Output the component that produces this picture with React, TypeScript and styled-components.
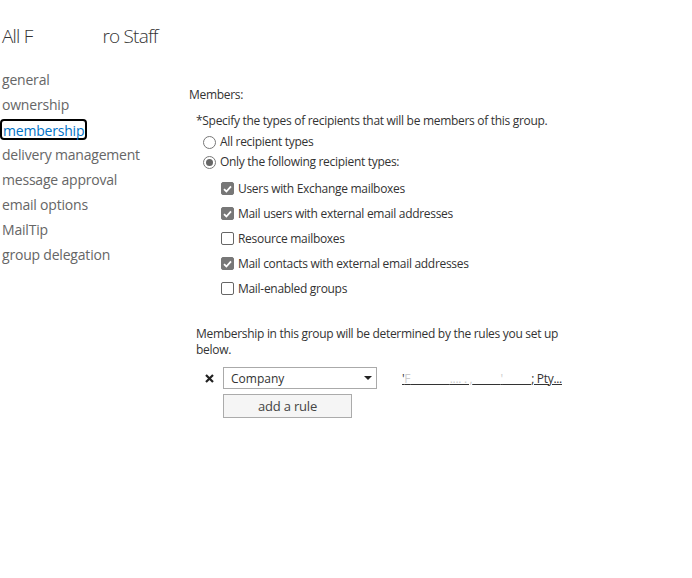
import React from "react";
import styled, { createGlobalStyle } from "styled-components";

const Global = createGlobalStyle`
  html, body { margin: 0; padding: 0; background: #fff; }
  body { font-family: "Segoe UI", "Open Sans", "Noto Sans", sans-serif; color: #333; }
`;

const Page = styled.div`
  width: 692px;
  height: 578px;
  padding-top: 22px;
  box-sizing: border-box;
`;

const Title = styled.h1`
  margin: 0;
  padding-left: 2px;
  font-size: 19px;
  font-weight: 300;
  line-height: 28px;
  color: #333;
  display: flex;
  letter-spacing: -0.8px;
`;

const TitleGap = styled.span`
  display: inline-block;
  width: 70px;
`;

const Body = styled.div`
  display: grid;
  grid-template-columns: 189px 1fr;
  margin-top: 17px;
`;

const Nav = styled.nav`
  display: flex;
  flex-direction: column;
  align-items: flex-start;
`;

const NavItem = styled.a<{ $active?: boolean }>`
  display: inline-block;
  font-size: 14px;
  line-height: 25px;
  height: 25px;
  color: ${(p) => (p.$active ? "#0072c6" : "#666")};
  padding: 0 2px;
  text-decoration: none;
  letter-spacing: -0.2px;
  cursor: pointer;
  box-sizing: border-box;
  ${(p) =>
    p.$active
      ? `
    line-height: 19px;
    height: 21px;
    margin: 2px 0;
    border: 2px solid #000;
    border-radius: 4px;
    padding: 0 1px 0 1px;
  `
      : ""}
`;

const Main = styled.div`
  padding-top: 20px;
  font-size: 12px;
  color: #333;
`;

const Label = styled.div<{ $h?: number }>`
  line-height: 16px;
  height: ${(p) => p.$h ?? 16}px;
  display: flex;
  align-items: center;
  letter-spacing: -0.3px;
`;

const Section = styled.div`
  padding-left: 7px;
  margin-top: 8px;
`;

const Row = styled.label<{ $indent: number; $h: number }>`
  display: flex;
  align-items: center;
  gap: 4px;
  padding-left: ${(p) => p.$indent}px;
  height: ${(p) => p.$h}px;
  line-height: 16px;
  letter-spacing: -0.3px;
`;

const RadioGroup = styled.div`
  margin-top: 1px;
`;

const Radio = styled.span<{ $checked?: boolean }>`
  width: 13px;
  height: 13px;
  box-sizing: border-box;
  border: 1px solid #777;
  border-radius: 50%;
  display: inline-flex;
  align-items: center;
  justify-content: center;
  background: #fff;
  &::after {
    content: "";
    width: 7px;
    height: 7px;
    border-radius: 50%;
    background: ${(p) => (p.$checked ? "#666" : "transparent")};
  }
`;

const Check = styled.span<{ $checked?: boolean }>`
  width: 13px;
  height: 13px;
  box-sizing: border-box;
  border: 1px solid ${(p) => (p.$checked ? "#777" : "#666")};
  border-radius: 2px;
  background: ${(p) => (p.$checked ? "#777" : "#fff")};
  display: inline-flex;
  align-items: center;
  justify-content: center;
`;

const CheckList = styled.div`
  margin-top: 4px;
`;

const Para = styled.p`
  margin: 25px 0 0;
  width: 370px;
  line-height: 16px;
  letter-spacing: -0.3px;
`;

const RuleRow = styled.div`
  display: flex;
  align-items: center;
  margin-top: 9px;
  height: 22px;
`;

const Remove = styled.span`
  width: 27px;
  display: inline-flex;
  justify-content: center;
  align-items: center;
  color: #222;
`;

const Select = styled.div`
  width: 154px;
  height: 22px;
  box-sizing: border-box;
  border: 1px solid #aaa;
  display: flex;
  align-items: center;
  justify-content: space-between;
  padding: 0 4px 0 7px;
  font-size: 12px;
  color: #333;
`;

const Value = styled.a`
  margin-left: 25px;
  color: #333;
  text-decoration: underline;
  text-decoration-color: #333;
  font-size: 12px;
  letter-spacing: -0.3px;
  width: 160px;
  white-space: nowrap;
  overflow: hidden;
`;

const Faint = styled.span`
  color: #ccc;
`;

const Button = styled.button`
  margin: 5px 0 0 27px;
  width: 129px;
  height: 24px;
  border: 1px solid #ababab;
  background: #f5f5f5;
  font-family: inherit;
  font-size: 13px;
  color: #444;
  padding: 0;
  letter-spacing: -0.2px;
`;

const CheckMark = () => (
  <svg width="9" height="8" viewBox="0 0 9 8">
    <path d="M1 4.2 L3.4 6.5 L8 1.4" fill="none" stroke="#fff" strokeWidth="1.8" />
  </svg>
);

const Caret = () => (
  <svg width="8" height="4" viewBox="0 0 8 4">
    <path d="M0 0 H8 L4 4 Z" fill="#222" />
  </svg>
);

const Cross = () => (
  <svg width="9" height="9" viewBox="0 0 9 9">
    <path d="M1 1 L8 8 M8 1 L1 8" stroke="#222" strokeWidth="2.2" />
  </svg>
);

const navItems = [
  "general",
  "ownership",
  "membership",
  "delivery management",
  "message approval",
  "email options",
  "MailTip",
  "group delegation",
];

const checks: [string, boolean][] = [
  ["Users with Exchange mailboxes", true],
  ["Mail users with external email addresses", true],
  ["Resource mailboxes", false],
  ["Mail contacts with external email addresses", true],
  ["Mail-enabled groups", false],
];

const pad = "\u00a0".repeat(14);
const pad2 = "\u00a0".repeat(10);

export default function App() {
  return (
    <Page>
      <Global />
      <Title>
        All F<TitleGap />ro Staff
      </Title>
      <Body>
        <Nav>
          {navItems.map((n) => (
            <NavItem key={n} $active={n === "membership"}>
              {n}
            </NavItem>
          ))}
        </Nav>
        <Main>
          <Label>Members:</Label>
          <Section>
            <Label $h={20}>*Specify the types of recipients that will be members of this group.</Label>
            <RadioGroup>
              <Row $indent={7} $h={20}>
                <Radio />
                All recipient types
              </Row>
              <Row $indent={7} $h={20}>
                <Radio $checked />
                Only the following recipient types:
              </Row>
            </RadioGroup>
            <CheckList>
              {checks.map(([t, c]) => (
                <Row key={t} $indent={25} $h={25}>
                  <Check $checked={c}>{c && <CheckMark />}</Check>
                  {t}
                </Row>
              ))}
            </CheckList>
            <Para>Membership in this group will be determined by the rules you set up below.</Para>
            <RuleRow>
              <Remove>
                <Cross />
              </Remove>
              <Select>
                Company
                <Caret />
              </Select>
              <Value>
                '<Faint>
                  F{pad}.... . ,{pad2}'{pad2}
                </Faint>
                ; Pty...
              </Value>
            </RuleRow>
            <Button>add a rule</Button>
          </Section>
        </Main>
      </Body>
    </Page>
  );
}
